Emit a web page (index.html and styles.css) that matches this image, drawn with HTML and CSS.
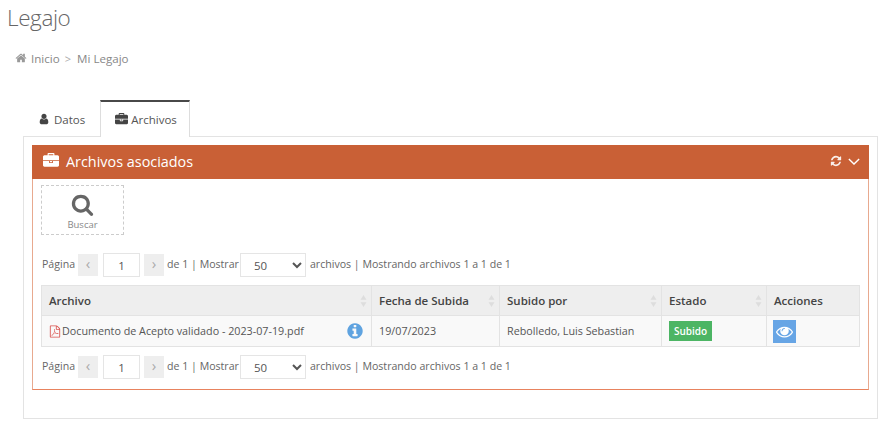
FILE: index.html
```html
<!DOCTYPE html>
<html lang="es">
<head>
    <meta charset="UTF-8">
    <meta name="viewport" content="width=device-width, initial-scale=1.0">
    <title>Legajo</title>
    <link rel="stylesheet" href="styles.css">
</head>
<body>
    <svg class="icon-defs" width="0" height="0">
        <symbol id="i-home" viewBox="0 0 1792 1792"><path d="M1472 992v480q0 26-19 45t-45 19h-384v-384h-256v384h-384q-26 0-45-19t-19-45v-480q0-1 .5-3t.5-3l575-474 575 474q1 2 1 6zm223-69l-62 74q-8 9-21 11h-3q-13 0-21-7l-692-577-692 577q-12 8-24 7-13-2-21-11l-62-74q-8-10-7-23.500t11-21.500l719-599q32-26 76-26t76 26l244 204v-195q0-14 9-23t23-9h192q14 0 23 9t9 23v408l219 182q10 8 11 21.500t-7 23.500z"/></symbol>
        <symbol id="i-user" viewBox="0 0 1792 1792"><path d="M1536 1399q0 109-62.500 187t-150.500 78h-854q-88 0-150.500-78t-62.500-187q0-85 8.500-160.500t31.500-152 58.500-131 94-89 134.500-34.500q131 128 313 128t313-128q76 0 134.500 34.500t94 89 58.500 131 31.500 152 8.500 160.500zm-256-887q0 159-112.500 271.500t-271.500 112.500-271.500-112.500-112.500-271.500 112.500-271.500 271.500-112.500 271.500 112.500 112.500 271.500z"/></symbol>
        <symbol id="i-briefcase" viewBox="0 0 1792 1792"><path d="M640 256h512v-128h-512v128zm1152 640v480q0 66-47 113t-113 47h-1472q-66 0-113-47t-47-113v-480h672v160q0 26 19 45t45 19h320q26 0 45-19t19-45v-160h672zm-768 0v128h-256v-128h256zm768-480v384h-1792v-384q0-66 47-113t113-47h352v-160q0-40 28-68t68-28h576q40 0 68 28t28 68v160h352q66 0 113 47t47 113z"/></symbol>
        <symbol id="i-refresh" viewBox="0 0 1792 1792"><path d="M1639 1056q0 5-1 7-64 268-268 434.500t-478 166.500q-146 0-282.500-55t-243.500-157l-129 129q-19 19-45 19t-45-19-19-45v-448q0-26 19-45t45-19h448q26 0 45 19t19 45-19 45l-137 137q71 66 161 102t187 36q134 0 250-65t186-179q11-17 53-117 8-23 30-23h192q13 0 22.500 9.500t9.500 22.500zm25-800v448q0 26-19 45t-45 19h-448q-26 0-45-19t-19-45 19-45l138-138q-148-137-349-137-134 0-250 65t-186 179q-11 17-53 117-8 23-30 23h-199q-13 0-22.500-9.500t-9.500-22.500v-7q65-268 270-434.500t480-166.500q146 0 284 55.500t245 156.500l130-129q19-19 45-19t45 19 19 45z"/></symbol>
        <symbol id="i-search" viewBox="0 0 1792 1792"><path d="M1216 832q0-185-131.500-316.500t-316.500-131.500-316.500 131.500-131.500 316.500 131.500 316.500 316.500 131.500 316.500-131.500 131.500-316.500zm512 832q0 52-38 90t-90 38q-54 0-90-38l-343-342q-179 124-399 124-143 0-273.500-55.500t-225-150-150-225-55.500-273.500 55.500-273.500 150-225 225-150 273.500-55.500 273.500 55.500 225 150 150 225 55.500 273.500q0 220-124 399l343 343q37 37 37 90z"/></symbol>
        <symbol id="i-pdf" viewBox="0 0 1792 1792"><path d="M1596 380q28 28 48 76t20 88v1152q0 40-28 68t-68 28h-1344q-40 0-68-28t-28-68v-1600q0-40 28-68t68-28h896q40 0 88 20t76 48zm-444-244v376h376q-10-29-22-41l-313-313q-12-12-41-22zm384 1528v-1024h-416q-40 0-68-28t-28-68v-416h-768v1536h1280zm-514-593q33 26 84 56 59-7 117-7 147 0 177 49 16 22 2 52 0 1-1 2l-2 2v1q-6 38-71 38-48 0-115-20t-130-53q-221 24-392 83-153 262-242 262-15 0-28-7l-24-12q-1-1-6-5-10-10-6-36 9-40 56-91.500t132-96.500q14-9 23 6 2 2 2 4 52-85 107-197 68-136 104-262-24-82-30.500-159.500t6.500-127.500q11-40 42-40h22q23 0 35 15 18 21 9 68-2 6-4 8 1 3 1 8v30q-2 123-14 192 55 164 146 238zm-576 411q52-24 137-158-51 40-87.500 84t-49.500 74zm398-920q-15 42-2 132 1-7 7-44 0-3 7-43 1-4 4-8-1-1-1-2-1-2-1-3-1-22-13-36 0 1-1 2v2zm-124 661q135-54 284-81-2-1-13-9.500t-16-13.500q-76-67-127-176-27 86-83 197-30 56-45 83zm646-16q-24-24-140-24 76 28 124 28 14 0 18-1 0-1-2-3z"/></symbol>
        <symbol id="i-info" viewBox="0 0 1792 1792"><path d="M1152 1376v-160q0-14-9-23t-23-9h-96v-512q0-14-9-23t-23-9h-320q-14 0-23 9t-9 23v160q0 14 9 23t23 9h96v320h-96q-14 0-23 9t-9 23v160q0 14 9 23t23 9h448q14 0 23-9t9-23zm-128-896v-160q0-14-9-23t-23-9h-192q-14 0-23 9t-9 23v160q0 14 9 23t23 9h192q14 0 23-9t9-23zm640 416q0 209-103 385.500t-279.500 279.500-385.500 103-385.500-103-279.500-279.500-103-385.500 103-385.500 279.500-279.500 385.500-103 385.500 103 279.500 279.500 103 385.500z"/></symbol>
        <symbol id="i-eye" viewBox="0 0 1792 1792"><path d="M1664 960q-152-236-381-353 61 104 61 225 0 185-131.500 316.500t-316.500 131.500-316.500-131.500-131.500-316.500q0-121 61-225-229 117-381 353 133 205 333.500 326.500t434.500 121.500 434.500-121.500 333.500-326.500zm-720-384q0-20-14-34t-34-14q-125 0-214.500 89.500t-89.500 214.500q0 20 14 34t34 14 34-14 14-34q0-86 61-147t147-61q20 0 34-14t14-34zm848 384q0 34-20 69-140 230-376.500 368.500t-499.500 138.500-499.500-139-376.500-368q-20-35-20-69t20-69q140-229 376.500-368t499.500-139 499.500 139 376.500 368q20 35 20 69z"/></symbol>
        <symbol id="i-sort" viewBox="0 0 8 14"><path d="M4 0l3.500 5.500h-7zM4 14l-3.500-5.500h7z"/></symbol>
    </svg>

    <h1 class="page-title">Legajo</h1>

    <div class="breadcrumb">
        <svg class="crumb-icon"><use href="#i-home"/></svg>
        <a href="#">Inicio</a>
        <span class="crumb-sep">&gt;</span>
        <a href="#">Mi Legajo</a>
    </div>

    <div class="tabs">
        <a class="tab" href="#"><svg class="tab-icon"><use href="#i-user"/></svg>Datos</a>
        <a class="tab active" href="#"><svg class="tab-icon"><use href="#i-briefcase"/></svg>Archivos</a>
    </div>

    <div class="tab-content">
        <div class="portlet">
            <div class="portlet-title">
                <svg class="title-icon"><use href="#i-briefcase"/></svg>
                <span class="caption">Archivos asociados</span>
                <div class="tools">
                    <svg class="tool-refresh"><use href="#i-refresh"/></svg>
                    <svg class="tool-chevron" viewBox="0 0 14 8"><path d="M1 1l6 6 6-6"/></svg>
                </div>
            </div>
            <div class="portlet-body">
                <a class="search-box" href="#">
                    <svg class="search-icon"><use href="#i-search"/></svg>
                    <span>Buscar</span>
                </a>

                <div class="pager pager-top">
                    <span>Página</span>
                    <button class="page-btn">&lsaquo;</button>
                    <input class="page-input" type="text" value="1">
                    <button class="page-btn">&rsaquo;</button>
                    <span>de 1 | Mostrar</span>
                    <select class="page-size"><option>50</option></select>
                    <span>archivos | Mostrando archivos 1 a 1 de 1</span>
                </div>

                <table class="files">
                    <thead>
                        <tr>
                            <th class="col-file"><div class="th-in">Archivo<svg class="sort"><use href="#i-sort"/></svg></div></th>
                            <th class="col-date"><div class="th-in">Fecha de Subida<svg class="sort"><use href="#i-sort"/></svg></div></th>
                            <th class="col-user"><div class="th-in">Subido por<svg class="sort"><use href="#i-sort"/></svg></div></th>
                            <th class="col-state"><div class="th-in">Estado<svg class="sort"><use href="#i-sort"/></svg></div></th>
                            <th class="col-actions"><div class="th-in">Acciones</div></th>
                        </tr>
                    </thead>
                    <tbody>
                        <tr>
                            <td>
                                <div class="file-cell">
                                    <svg class="pdf-icon"><use href="#i-pdf"/></svg>
                                    <span class="file-name">Documento de Acepto validado - 2023-07-19.pdf</span>
                                    <svg class="info-icon"><use href="#i-info"/></svg>
                                </div>
                            </td>
                            <td>19/07/2023</td>
                            <td>Rebolledo, Luis Sebastian</td>
                            <td><span class="label-ok">Subido</span></td>
                            <td class="cell-action"><a class="btn-view" href="#"><svg class="eye-icon"><use href="#i-eye"/></svg></a></td>
                        </tr>
                    </tbody>
                </table>

                <div class="pager">
                    <span>Página</span>
                    <button class="page-btn">&lsaquo;</button>
                    <input class="page-input" type="text" value="1">
                    <button class="page-btn">&rsaquo;</button>
                    <span>de 1 | Mostrar</span>
                    <select class="page-size"><option>50</option></select>
                    <span>archivos | Mostrando archivos 1 a 1 de 1</span>
                </div>
            </div>
        </div>
    </div>
</body>
</html>
```

FILE: styles.css
```css
* {
    margin: 0;
    padding: 0;
    box-sizing: border-box;
    font-family: "Open Sans", "Liberation Sans", sans-serif;
}

body {
    background-color: #fff;
    color: #555;
    font-size: 11.5px;
    overflow: hidden;
}

a {
    color: inherit;
    text-decoration: none;
}

svg {
    fill: currentColor;
}

.icon-defs {
    position: absolute;
}

.page-title {
    font-size: 22.5px;
    font-weight: 300;
    letter-spacing: -0.4px;
    line-height: 30px;
    color: #666;
    padding: 3px 0 0 7px;
}

.breadcrumb {
    display: flex;
    align-items: center;
    height: 20px;
    margin-top: 15px;
    padding-left: 15px;
    color: #888;
    font-size: 11.6px;
}

.crumb-icon {
    width: 12px;
    height: 12px;
    margin-right: 4px;
    color: #999;
}

.crumb-sep {
    margin: 0 6px 0 5px;
    font-size: 11px;
    color: #aaa;
}

.tabs {
    display: flex;
    margin: 32px 0 0 24px;
    height: 37px;
    position: relative;
    z-index: 1;
}

.tab {
    display: flex;
    align-items: center;
    padding: 0 15px 0 14px;
    font-size: 11.5px;
    color: #555;
    border-top: 2px solid transparent;
    height: 36px;
}

.tab.active {
    background-color: #fff;
    height: 37px;
    padding: 0 12px 1px 14px;
    border-top: 2px solid #484848;
    border-left: 1px solid #ddd;
    border-right: 1px solid #ddd;
}

.tab-icon {
    width: 12px;
    height: 12px;
    margin-right: 4px;
    color: #444;
}

.tab.active .tab-icon {
    width: 13px;
    height: 13px;
    margin-right: 3px;
}

.tab-content {
    margin: -1px 8px 0 23px;
    height: 283px;
    padding: 8px;
    border: 1px solid #e3e3e3;
}

.portlet {
    border: 1px solid #e8a98f;
    border-bottom-color: #e8835e;
    height: 245px;
}

.portlet-title {
    display: flex;
    align-items: center;
    height: 34px;
    margin: -1px -1px 0;
    padding: 0 9px 2px 11px;
    background-color: #c96036;
    color: #fff;
}

.title-icon {
    width: 16px;
    height: 16px;
    margin-right: 7px;
}

.caption {
    font-size: 14.4px;
}

.tools {
    display: flex;
    align-items: center;
    gap: 6px;
    margin-left: auto;
    color: rgba(255, 255, 255, 0.9);
}

.tool-refresh {
    width: 12px;
    height: 12px;
}

.tool-chevron {
    width: 12px;
    height: 7px;
    fill: none;
    stroke: #fff;
    stroke-width: 1.6;
}

.portlet-body {
    padding: 6px 8px 0;
}

.search-box {
    display: flex;
    flex-direction: column;
    align-items: center;
    width: 83px;
    height: 50px;
    padding-top: 7px;
    border: 1px dashed #ccc;
    color: #888;
    font-size: 9.5px;
}

.search-icon {
    width: 23px;
    height: 23px;
    color: #666;
    margin-bottom: 2px;
}

.pager {
    display: flex;
    align-items: center;
    height: 24px;
    margin-top: 8px;
    padding-left: 1px;
    font-size: 10.6px;
    color: #666;
}

.pager-top {
    margin-top: 18px;
    margin-bottom: 8px;
}

.pager span {
    padding-bottom: 2px;
}

.page-btn {
    width: 20px;
    height: 22px;
    margin-bottom: 1px;
    padding-bottom: 3px;
    background-color: #eee;
    border: none;
    color: #aaa;
    font-size: 15px;
    line-height: 18px;
}

.page-btn:first-of-type {
    margin-left: 3px;
}

.page-input {
    width: 37px;
    height: 24px;
    margin: 0 4px 0 5px;
    border: 1px solid #e5e5e5;
    text-align: center;
    font-size: 11.5px;
    color: #555;
}

.page-size {
    width: 66px;
    height: 24px;
    margin: 0 4px 0 1px;
    padding-left: 9px;
    background-color: #fff;
    border: 1px solid #e5e5e5;
    font-size: 11.5px;
    color: #555;
}

.pager span:nth-of-type(2) {
    margin-left: 3px;
}

.files {
    width: 818px;
    border-collapse: collapse;
    table-layout: fixed;
}

.files th,
.files td {
    border: 1px solid #e3e3e3;
    text-align: left;
    padding: 0 6px 0 7px;
}

.files th {
    height: 30px;
    background-color: #eee;
    font-size: 11.5px;
    font-weight: 600;
    color: #444;
}

.files td {
    height: 31px;
    background-color: #f9f9f9;
    font-size: 10.75px;
    color: #555;
}

.col-file { width: 330px; }
.col-date { width: 128px; }
.col-user { width: 162px; }
.col-state { width: 105px; }
.col-actions { width: 93px; }

.th-in {
    display: flex;
    align-items: center;
    justify-content: space-between;
}

.sort {
    width: 7px;
    height: 12px;
    color: #ddd;
    margin-right: -2px;
}

.file-cell {
    display: flex;
    align-items: center;
}

.pdf-icon {
    width: 12px;
    height: 13px;
    margin-right: 1px;
    color: #d9534f;
}

.info-icon {
    width: 18px;
    height: 18px;
    margin-left: auto;
    margin-right: 1px;
    color: #5fa3e0;
}

.label-ok {
    display: inline-block;
    padding: 3px 5px;
    background-color: #4cb564;
    color: #fff;
    font-size: 10px;
    font-weight: 600;
}

.files .cell-action {
    padding-left: 6px;
}

.btn-view {
    display: flex;
    align-items: center;
    justify-content: center;
    width: 23px;
    height: 23px;
    background-color: #67a5e5;
    color: #fff;
}

.eye-icon {
    width: 17px;
    height: 17px;
}
```
